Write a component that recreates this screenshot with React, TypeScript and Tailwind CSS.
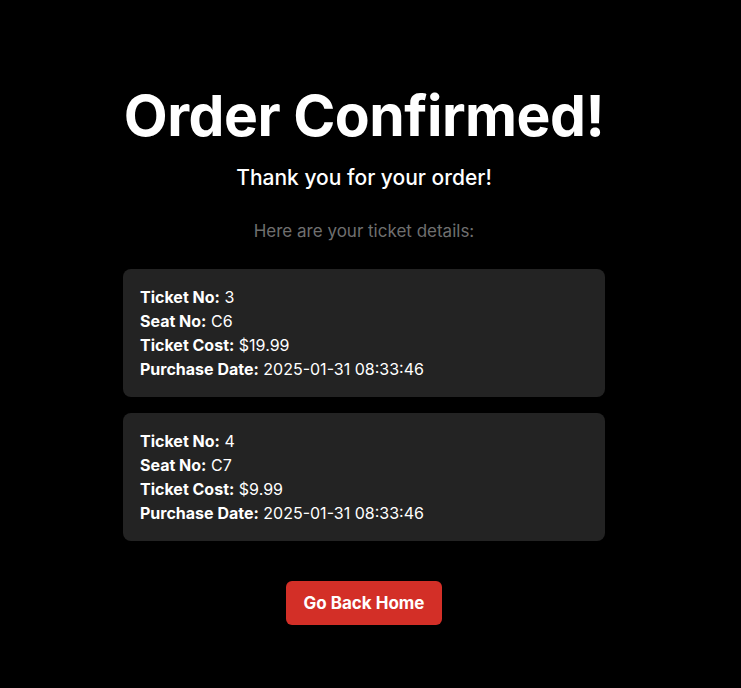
const tickets = [
  { no: 3, seat: "C6", cost: "$19.99", date: "2025-01-31 08:33:46" },
  { no: 4, seat: "C7", cost: "$9.99", date: "2025-01-31 08:33:46" },
];

function TicketCard({ t }: { t: (typeof tickets)[number] }) {
  return (
    <div className="rounded-lg bg-[#232323] py-4 pl-[17px] pr-4 text-base leading-6 text-white">
      <div>
        <span className="font-bold">Ticket No:</span> {t.no}
      </div>
      <div>
        <span className="font-bold">Seat No:</span> {t.seat}
      </div>
      <div>
        <span className="font-bold">Ticket Cost:</span> {t.cost}
      </div>
      <div>
        <span className="font-bold">Purchase Date:</span> {t.date}
      </div>
    </div>
  );
}

export default function App() {
  return (
    <div className="min-h-[688px] bg-black font-['Inter',sans-serif] text-white">
      <div className="flex w-[728px] flex-col items-center pt-[80px]">
        <h1 className="text-[57px] font-bold leading-[72px] tracking-[-0.5px]">Order Confirmed!</h1>
        <p className="mt-[12px] text-[21px] font-medium leading-7">Thank you for your order!</p>
        <p className="mt-[27px] text-[17px] leading-6 text-[#6f6f6f]">Here are your ticket details:</p>

        <div className="mt-[26px] flex w-[482px] flex-col gap-4">
          {tickets.map((t) => (
            <TicketCard key={t.no} t={t} />
          ))}
        </div>

        <button className="mt-10 rounded-md bg-[#d32f27] px-[18px] py-2.5 text-[17px] font-bold leading-6 text-white">
          Go Back Home
        </button>
      </div>
    </div>
  );
}
